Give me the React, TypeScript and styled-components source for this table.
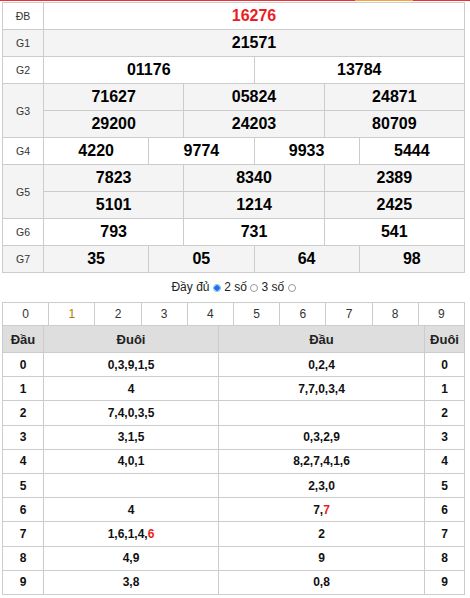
import React from "react";
import styled, { createGlobalStyle } from "styled-components";

const GlobalStyle = createGlobalStyle`
  html, body { margin: 0; padding: 0; background: #fff; }
  body { font-family: "Liberation Sans", Arial, sans-serif; color: #000; }
  * { box-sizing: border-box; }
`;

const Page = styled.div`
  width: 470px;
  padding-left: 2px;
`;

const TabLine = styled.div`
  display: flex;
  height: 1px;
  margin-left: -2px;
  margin-bottom: 1px;
`;

const TabSeg = styled.div<{ $active?: boolean; $w?: number }>`
  height: 1px;
  background: ${(p) => (p.$active ? "#f5a33a" : "#ec2f35")};
  ${(p) => (p.$w ? `width: ${p.$w}px; flex: none;` : "flex: 1;")}
`;

const ResultGrid = styled.div`
  display: grid;
  grid-template-columns: 41px repeat(12, 1fr);
  grid-auto-rows: 27px;
  width: 463px;
  border-top: 1px solid #ccc;
  border-left: 1px solid #ccc;
`;

const Cell = styled.div<{ $alt?: boolean }>`
  display: flex;
  align-items: center;
  justify-content: center;
  border-right: 1px solid #ccc;
  border-bottom: 1px solid #ccc;
  background: ${(p) => (p.$alt ? "#f4f4f4" : "#fff")};
`;

const LabelCell = styled(Cell)<{ $rows: number }>`
  grid-row: span ${(p) => p.$rows};
  font-size: 10.5px;
  color: #333;
`;

const NumCell = styled(Cell)<{ $span: number; $special?: boolean }>`
  grid-column: span ${(p) => p.$span};
  font-size: 16px;
  font-weight: bold;
  color: ${(p) => (p.$special ? "#ed1c24" : "#000")};
`;

const Options = styled.div`
  width: 463px;
  height: 29px;
  line-height: 29px;
  text-align: center;
  font-size: 12px;
  color: #222;
  white-space: pre;
`;

const Radio = styled.span<{ $checked?: boolean }>`
  display: inline-block;
  vertical-align: -1px;
  width: 8px;
  height: 8px;
  border-radius: 50%;
  border: 1px solid ${(p) => (p.$checked ? "#7fb4ea" : "#9a9a9a")};
  background: ${(p) => (p.$checked ? "radial-gradient(circle, #1a73e8 0 2.5px, #cfe3fb 3px)" : "#fff")};
`;

const DigitRow = styled.div`
  display: grid;
  grid-template-columns: repeat(10, 1fr);
  grid-auto-rows: 23px;
  width: 463px;
  border-top: 1px solid #ccc;
  border-left: 1px solid #ccc;
`;

const DigitCell = styled(Cell)<{ $hl?: boolean }>`
  font-size: 12px;
  color: ${(p) => (p.$hl ? "#b57a00" : "#333")};
`;

const LotoGrid = styled.div`
  display: grid;
  grid-template-columns: 41px 175px 1fr 40px;
  grid-template-rows: 27px;
  grid-auto-rows: 24.2px;
  width: 463px;
  border-left: 1px solid #ccc;
`;

const HeadCell = styled(Cell)`
  background: #dedede;
  font-size: 13px;
  font-weight: bold;
  color: #222;
`;

const LotoCell = styled(Cell)`
  font-size: 12px;
  font-weight: bold;
  color: #111;
`;

const Red = styled.span`
  color: #ed1c24;
`;

type Row = { label: string; values: string[]; perLine: number; special?: boolean };

const rows: Row[] = [
  { label: "ĐB", values: ["16276"], perLine: 1, special: true },
  { label: "G1", values: ["21571"], perLine: 1 },
  { label: "G2", values: ["01176", "13784"], perLine: 2 },
  { label: "G3", values: ["71627", "05824", "24871", "29200", "24203", "80709"], perLine: 3 },
  { label: "G4", values: ["4220", "9774", "9933", "5444"], perLine: 4 },
  { label: "G5", values: ["7823", "8340", "2389", "5101", "1214", "2425"], perLine: 3 },
  { label: "G6", values: ["793", "731", "541"], perLine: 3 },
  { label: "G7", values: ["35", "05", "64", "98"], perLine: 4 },
];

const loto: [string, string][] = [
  ["0,3,9,1,5", "0,2,4"],
  ["4", "7,7,0,3,4"],
  ["7,4,0,3,5", ""],
  ["3,1,5", "0,3,2,9"],
  ["4,0,1", "8,2,7,4,1,6"],
  ["", "2,3,0"],
  ["4", "7,*7"],
  ["1,6,1,4,*6", "2"],
  ["4,9", "9"],
  ["3,8", "0,8"],
];

const renderLoto = (s: string) => {
  const i = s.indexOf("*");
  if (i < 0) return s;
  return (
    <>
      {s.slice(0, i)}
      <Red>{s.slice(i + 1)}</Red>
    </>
  );
};

export default function App() {
  return (
    <>
      <GlobalStyle />
      <Page>
        <TabLine>
          <TabSeg />
          <TabSeg $active $w={58} />
          <TabSeg $w={57} />
        </TabLine>
        <ResultGrid>
          {rows.map((r, ri) => {
            const alt = ri % 2 === 1;
            const lines = r.values.length / r.perLine;
            return (
              <React.Fragment key={r.label}>
                <LabelCell $alt={alt} $rows={lines}>
                  {r.label}
                </LabelCell>
                {r.values.map((v, vi) => (
                  <NumCell key={vi} $alt={alt} $span={12 / r.perLine} $special={r.special}>
                    {v}
                  </NumCell>
                ))}
              </React.Fragment>
            );
          })}
        </ResultGrid>
        <Options>
          {"Đầy đủ "}
          <Radio $checked />
          {" 2 số "}
          <Radio />
          {" 3 số "}
          <Radio />
        </Options>
        <DigitRow>
          {Array.from({ length: 10 }, (_, i) => (
            <DigitCell key={i} $hl={i === 1}>
              {i}
            </DigitCell>
          ))}
        </DigitRow>
        <LotoGrid>
          <HeadCell>Đầu</HeadCell>
          <HeadCell>Đuôi</HeadCell>
          <HeadCell>Đầu</HeadCell>
          <HeadCell>Đuôi</HeadCell>
          {loto.map(([a, b], i) => (
            <React.Fragment key={i}>
              <LotoCell>{i}</LotoCell>
              <LotoCell>{renderLoto(a)}</LotoCell>
              <LotoCell>{renderLoto(b)}</LotoCell>
              <LotoCell>{i}</LotoCell>
            </React.Fragment>
          ))}
        </LotoGrid>
      </Page>
    </>
  );
}
